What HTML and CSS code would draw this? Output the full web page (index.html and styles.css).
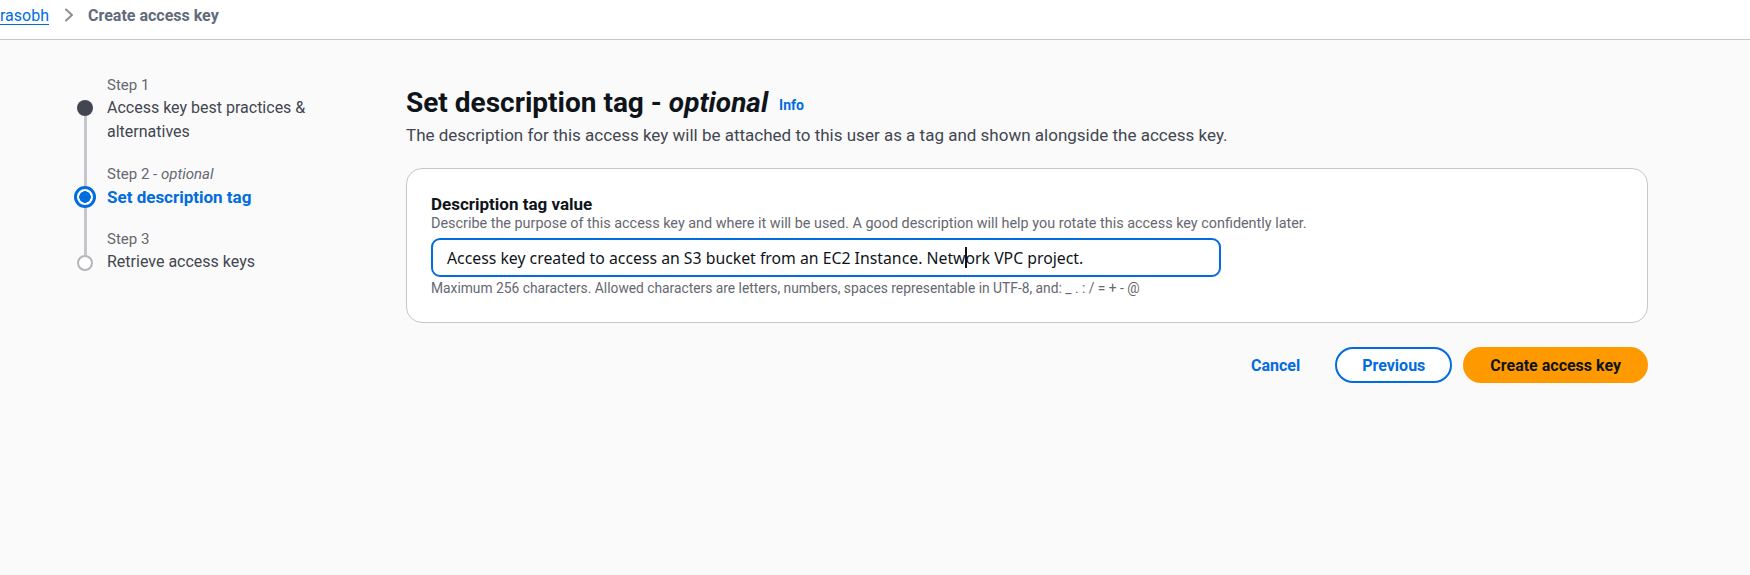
FILE: index.html
```
<!DOCTYPE html>
<html lang="en">
<head>
<meta charset="utf-8">
<title>Create access key</title>
<link rel="stylesheet" href="styles.css">
</head>
<body>
<header class="topbar">
  <nav class="crumbs">
    <a class="crumb-link" href="#">rasobh</a>
    <svg class="crumb-chev" width="10" height="14" viewBox="0 0 10 14"><path d="M2 1.5 L8 7 L2 12.5" fill="none" stroke="#8c8c94" stroke-width="2" stroke-linecap="round" stroke-linejoin="round"/></svg>
    <span class="crumb-current">Create access key</span>
  </nav>
</header>
<main class="page">
  <ol class="steps">
    <li class="step done">
      <div class="rail"><span class="conn top hidden"></span><span class="dot"></span><span class="conn bottom"></span></div>
      <div class="step-text">
        <div class="step-label">Step 1</div>
        <div class="step-title">Access key best practices &amp;<br>alternatives</div>
      </div>
    </li>
    <li class="step active">
      <div class="rail"><span class="conn top"></span><span class="dot"></span><span class="conn bottom"></span></div>
      <div class="step-text">
        <div class="step-label">Step 2 - <i>optional</i></div>
        <div class="step-title">Set description tag</div>
      </div>
    </li>
    <li class="step todo">
      <div class="rail"><span class="conn top"></span><span class="dot"></span><span class="conn bottom hidden"></span></div>
      <div class="step-text">
        <div class="step-label">Step 3</div>
        <div class="step-title last">Retrieve access keys</div>
      </div>
    </li>
  </ol>
  <section class="content">
    <h1 class="title">Set description tag - <i>optional</i> <a class="info" href="#">Info</a></h1>
    <p class="lead">The description for this access key will be attached to this user as a tag and shown alongside the access key.</p>
    <div class="card">
      <div class="field-label">Description tag value</div>
      <div class="field-hint">Describe the purpose of this access key and where it will be used. A good description will help you rotate this access key confidently later.</div>
      <div class="field-input" role="textbox">Access key created to access an S3 bucket from an EC2 Instance. Netw<span class="caret"></span>ork VPC project.</div>
      <div class="field-hint constraint">Maximum 256 characters. Allowed characters are letters, numbers, spaces representable in UTF-8, and: _ . : / = + - @</div>
    </div>
    <div class="actions">
      <button class="btn link">Cancel</button>
      <button class="btn normal">Previous</button>
      <button class="btn primary">Create access key</button>
    </div>
  </section>
</main>
</body>
</html>
```
FILE: styles.css
```
* { box-sizing: border-box; }
html, body { margin: 0; padding: 0; }
body {
  font-family: Roboto, "Liberation Sans", Arial, sans-serif;
  background: #fafafa;
  color: #0f141a;
  width: 1750px;
  height: 575px;
  overflow: hidden;
}
.topbar {
  height: 40px;
  background: #ffffff;
  border-bottom: 1px solid #c6c6cd;
}
.crumbs {
  display: flex;
  align-items: center;
  height: 30px;
  font-size: 16px;
  font-weight: 700;
}
.crumb-link {
  color: #006ce0;
  font-weight: 400;
  text-decoration: underline;
  text-underline-offset: 3px;
}
.crumb-chev { margin: 0 14px 0 15px; }
.crumb-current { color: #5f6b7a; }

.page {
  display: flex;
  padding-left: 74px;
  padding-top: 36px;
}
.steps {
  list-style: none;
  margin: 0;
  padding: 0;
  width: 332px;
}
.step {
  display: flex;
  gap: 11px;
}
.rail {
  width: 22px;
  display: flex;
  flex-direction: column;
  align-items: center;
}
.conn {
  width: 3px;
  background: #c6c6cd;
}
.conn.hidden { visibility: hidden; }
.conn.top { height: 24px; flex: none; }
.conn.bottom { flex: 1; }
.dot {
  width: 16px;
  height: 16px;
  border-radius: 50%;
  flex: none;
}
.done .dot { background: #424650; }
.active .conn.top { height: 21px; }
.active .dot {
  width: 22px;
  height: 22px;
  border: 3px solid #006ce0;
  background: radial-gradient(circle, #006ce0 0 5.5px, #ffffff 6px);
}
.todo .conn.top { height: 25px; }
.todo .dot {
  width: 16px;
  height: 16px;
  border: 2px solid #b4b4bb;
  background: #ffffff;
}
.step-label {
  font-size: 15px;
  line-height: 18px;
  color: #656871;
  margin-bottom: 2px;
}
.step-title {
  font-size: 16px;
  line-height: 24px;
  color: #424650;
  margin-bottom: 21px;
}
.step-title.last { margin-bottom: 0; }
.active .step-title { color: #006ce0; font-weight: 700; font-size: 17px; }

.content {
  width: 1242px;
}
.title {
  margin: 9px 0 0;
  font-size: 28px;
  line-height: 36px;
  font-weight: 700;
  color: #0f141a;
}
.title i { font-weight: 700; }
.info {
  font-size: 14px;
  color: #006ce0;
  text-decoration: none;
  margin-left: 4px;
  vertical-align: 2px;
}
.lead {
  margin: 1px 0 0;
  font-size: 17px;
  line-height: 22px;
  color: #424650;
}
.card {
  margin-top: 22px;
  background: #ffffff;
  border: 1px solid #c6c6cd;
  border-radius: 16px;
  padding: 25px 24px 25px;
}
.field-label {
  font-size: 17px;
  line-height: 20px;
  font-weight: 700;
  color: #0f141a;
}
.field-hint {
  margin-top: 1px;
  font-size: 14.4px;
  line-height: 18px;
  color: #656871;
}
.field-input {
  margin-top: 5px;
  width: 790px;
  height: 39px;
  border: 2px solid #006ce0;
  border-radius: 9px;
  padding: 0 14px;
  display: flex;
  align-items: center;
  font-family: "Noto Sans", Roboto, sans-serif;
  font-size: 15.8px;
  color: #0f141a;
  background: #ffffff;
  white-space: pre;
}
.caret {
  display: inline-block;
  width: 2px;
  height: 21px;
  background: #0f141a;
  margin: 0 -1px;
}
.field-hint.constraint { margin-top: 2px; font-size: 13.8px; }
.actions {
  display: flex;
  justify-content: flex-end;
  align-items: center;
  gap: 11px;
  margin-top: 24px;
}
.btn {
  font-family: inherit;
  font-size: 16px;
  font-weight: 700;
  height: 36px;
  border-radius: 20px;
  padding: 0 25px;
  cursor: pointer;
}
.btn.link {
  background: transparent;
  border: none;
  color: #006ce0;
  padding: 0 24px 0 20px;
}
.btn.normal {
  background: #ffffff;
  border: 2px solid #006ce0;
  color: #006ce0;
}
.btn.primary {
  background: #ff9900;
  border: 2px solid #ff9900;
  color: #0f141a;
}
```
